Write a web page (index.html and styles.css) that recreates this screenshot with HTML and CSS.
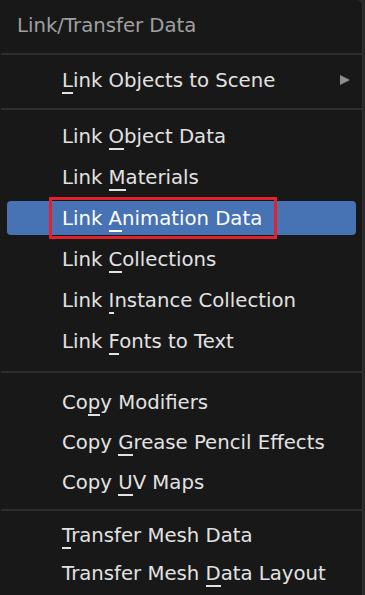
FILE: index.html
```html
<!DOCTYPE html>
<html lang="en">
  <head>
    <meta charset="UTF-8" />
    <meta name="viewport" content="width=device-width, initial-scale=1.0" />
    <title>Link/Transfer Data</title>
    <link rel="stylesheet" href="styles.css">
  </head>
  <body>
    <div class="menu">
      <div class="menu-title">Link/Transfer Data</div>
      <div class="sep"></div>

      <div class="group group-scene">
        <div class="item">
          <span><u>L</u>ink Objects to Scene</span>
          <span class="arrow"></span>
        </div>
      </div>
      <div class="sep"></div>

      <div class="group group-link">
        <div class="item"><span>Link <u>O</u>bject Data</span></div>
        <div class="item"><span>Link <u>M</u>aterials</span></div>
        <div class="item active"><span class="marked">Link <u>A</u>nimation Data</span></div>
        <div class="item"><span>Link <u>C</u>ollections</span></div>
        <div class="item"><span>Link <u>I</u>nstance Collection</span></div>
        <div class="item"><span>Link <u>F</u>onts to Text</span></div>
      </div>
      <div class="sep"></div>

      <div class="group group-copy">
        <div class="item"><span>Co<u>p</u>y Modifiers</span></div>
        <div class="item"><span>Copy <u>G</u>rease Pencil Effects</span></div>
        <div class="item"><span>Copy <u>U</u>V Maps</span></div>
      </div>
      <div class="sep"></div>

      <div class="group group-transfer">
        <div class="item"><span><u>T</u>ransfer Mesh Data</span></div>
        <div class="item"><span>Transfer Mesh <u>D</u>ata Layout</span></div>
      </div>
    </div>
  </body>
</html>
```

FILE: styles.css
```css
* {
  margin: 0;
  padding: 0;
  box-sizing: border-box;
}
body {
  background-color: #2a2a2a;
  font-family: "DejaVu Sans", "Liberation Sans", sans-serif;
  font-size: 19.7px;
  color: #e2e2e2;
}
.menu {
  width: 363px;
  height: 595px;
  overflow: hidden;
  background-color: #181818;
  border-right: 1px solid #303030;
  border-top-right-radius: 6px;
}
.menu-title {
  height: 53px;
  padding: 9px 17px 10px;
  line-height: 34px;
  color: #a0a0a0;
}
.sep {
  height: 2px;
  margin-left: 1px;
  background-color: #2e2e2e;
}
.group {
  display: flex;
  flex-direction: column;
  gap: 7px;
}
.group-scene {
  padding: 8px 0 11px;
}
.group-link {
  padding: 9px 0 13px;
}
.group-copy {
  gap: 6px;
  padding: 12px 0 10px;
}
.group-transfer {
  gap: 4px;
  padding: 7px 0 4px;
}
.item {
  height: 34px;
  margin: 0 6px 0 7px;
  padding: 0 6px 0 55px;
  border-radius: 4px;
  display: flex;
  align-items: center;
  justify-content: space-between;
  white-space: nowrap;
}
.item u {
  text-decoration: none;
  border-bottom: 2px solid currentColor;
}
.item.active {
  background-color: #4772b3;
  color: #ffffff;
}
.arrow {
  width: 0;
  height: 0;
  border-top: 5.5px solid transparent;
  border-bottom: 5.5px solid transparent;
  border-left: 10px solid #8c8c8c;
}
/* red annotation frame drawn over the hovered entry */
.marked {
  position: relative;
}
.marked::after {
  content: "";
  position: absolute;
  left: -13px;
  right: -15px;
  top: -10px;
  bottom: -9px;
  border: 3px solid #e4202c;
}
```
